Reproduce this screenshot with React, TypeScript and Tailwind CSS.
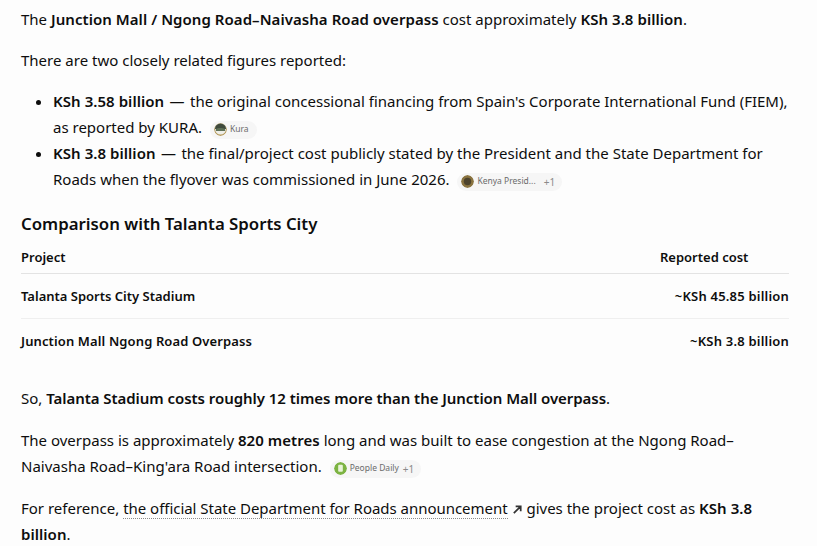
function SourceChip({ name, extra, extraClass, children }: { name: string; extra?: string; extraClass?: string; children: React.ReactNode }) {
  return (
    <span className={`ml-[4px] inline-flex h-[18px] items-center gap-[3px] rounded-full bg-[#f6f6f6] pl-[4px] align-[-3px] text-[8.5px] leading-none text-[#6b6b6b] ${extra ? 'pr-[7px]' : 'pr-[8px]'}`}>
      <svg viewBox="0 0 14 14" className="h-[13px] w-[13px] shrink-0 rounded-full">
        {children}
      </svg>
      <span>{name}</span>
      {extra && <span className={`text-[10px] text-[#8a8a8a] ${extraClass}`}>{extra}</span>}
    </span>
  );
}

function B({ children }: { children: React.ReactNode }) {
  return <strong className="font-semibold tracking-[0.05px]">{children}</strong>;
}

export default function App() {
  return (
    <div className="h-[546px] w-[817px] overflow-hidden bg-[#fdfdfd] pl-[21px] pr-[28px] pt-[6px] font-['Noto_Sans',sans-serif] text-[15px] leading-[26px] text-[#0d0d0d]">
      <p>
        The <B>Junction Mall / Ngong Road–Naivasha Road overpass</B> cost approximately <B>KSh 3.8 billion</B>.
      </p>
      <p className="mt-[15px]">There are two closely related figures reported:</p>
      <ul className="mt-[15px] list-disc pl-[32px]">
        <li>
          <B>KSh 3.58 billion</B> <span className="px-[1.5px]">—</span> the original concessional financing from Spain's Corporate International Fund (FIEM), as reported by KURA.{' '}
          <SourceChip name="Kura">
            <circle cx="7" cy="7" r="7" fill="#b59a5c" />
            <circle cx="7" cy="6.5" r="6" fill="#eeeee8" />
            <path d="M1 6.5a6 6 0 0 1 12 0z" fill="#3f4a3c" />
            <path d="M2 6.5c2-1.5 7-1.5 10 0v2H2z" fill="#5d6f55" />
          </SourceChip>
        </li>
        <li>
          <B>KSh 3.8 billion</B> <span className="px-[1.5px]">—</span> the final/project cost publicly stated by the President and the State Department for Roads when the flyover was commissioned in June 2026.{' '}
          <SourceChip name="Kenya Presid..." extra="+1" extraClass="ml-[5px]">
            <circle cx="7" cy="7" r="7" fill="#8a7440" />
            <circle cx="7" cy="7" r="4" fill="#4d432c" />
          </SourceChip>
        </li>
      </ul>
      <h2 className="mt-[19px] text-[16.8px] font-semibold leading-[26px]">Comparison with Talanta Sports City</h2>
      <table className="mt-[4px] w-full border-collapse text-[13px]">
        <thead>
          <tr className="border-b border-[#e3e3e3]">
            <th className="h-[32px] text-left font-semibold">Project</th>
            <th className="w-[129px] text-left font-semibold">Reported cost</th>
          </tr>
        </thead>
        <tbody>
          <tr className="border-b border-[#efefef]">
            <td className="h-[45px] font-semibold">Talanta Sports City Stadium</td>
            <td className="text-right font-semibold tracking-[0.2px]">~KSh 45.85 billion</td>
          </tr>
          <tr>
            <td className="h-[45px] font-semibold tracking-[0.12px]">Junction Mall Ngong Road Overpass</td>
            <td className="text-right font-semibold tracking-[0.2px]">~KSh 3.8 billion</td>
          </tr>
        </tbody>
      </table>
      <p className="mt-[22px]">
        So, <strong className="font-semibold tracking-[-0.05px]">Talanta Stadium costs roughly 12 times more than the Junction Mall overpass</strong>.
      </p>
      <p className="mt-[16px]">
        The overpass is approximately <B>820 metres</B> long and was built to ease congestion at the Ngong Road–Naivasha Road–King'ara Road intersection.{' '}
        <SourceChip name="People Daily" extra="+1" extraClass="ml-[1px]">
          <circle cx="7" cy="7" r="7" fill="#7cb342" />
          <rect x="4.5" y="3" width="5" height="7.5" rx="1" fill="#e8f3d8" />
        </SourceChip>
      </p>
      <p className="mt-[16px]">
        For reference,{' '}
        <span className="border-b border-dotted border-[#8a8a8a] tracking-[-0.03px]">the official State Department for Roads announcement</span>{' '}
        <svg viewBox="0 0 12 12" className="inline-block h-[11px] w-[11px] align-[-1px] text-[#333]" fill="none" stroke="currentColor" strokeWidth="1.9">
          <path d="M2 10 9.5 2.5M4 2.5h5.5V8" />
        </svg>{' '}
        gives the project cost as <B>KSh 3.8 billion</B>.
      </p>
    </div>
  );
}
